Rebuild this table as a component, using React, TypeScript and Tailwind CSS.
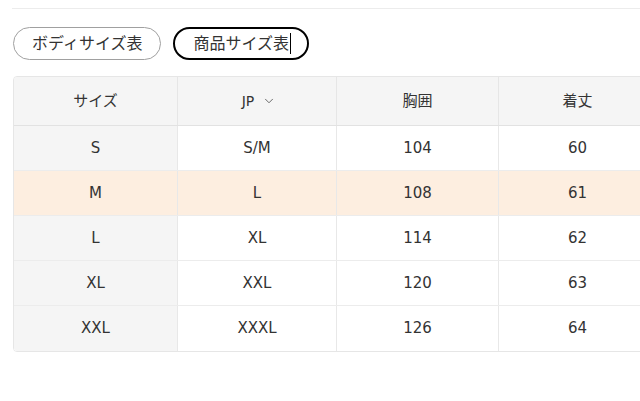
import { ChevronDown } from "lucide-react";

// size chart: body / product tabs + a measurement table (JP sizing)

const ROWS = [
  { size: "S", jp: "S/M", chest: "104", length: "60" },
  { size: "M", jp: "L", chest: "108", length: "61", hl: true },
  { size: "L", jp: "XL", chest: "114", length: "62" },
  { size: "XL", jp: "XXL", chest: "120", length: "63" },
  { size: "XXL", jp: "XXXL", chest: "126", length: "64" },
];

const font = { fontFamily: '"DejaVu Sans", "Noto Sans CJK JP", sans-serif' };

export default function App() {
  return (
    <div className="h-[401px] w-[640px] overflow-hidden bg-white text-[#333]" style={font}>
      <div className="ml-3 mt-2 border-t border-[#ececec]" />

      <div className="flex items-center gap-3 pl-[13px] pt-[18px]">
        <button className="h-[33px] rounded-full border border-[#a0a0a0] px-[18px] text-[16px] leading-none text-[#333]">
          ボディサイズ表
        </button>
        <button className="flex h-[33px] items-center rounded-full border-2 border-black pl-[18px] pr-[16px] text-[16px] leading-none text-[#333]">
          商品サイズ表
          <span className="ml-px inline-block h-[21px] w-px bg-black" />
        </button>
      </div>

      <div className="ml-[13px] mt-[16px] w-[660px] overflow-hidden rounded border border-[#e6e6e6] text-[15px]">
        <div className="flex h-[49px] items-center border-b border-[#e2e2e2] bg-[#f5f5f5]">
          <div className="w-[163px] text-center">サイズ</div>
          <div className="flex w-[159px] items-center justify-center gap-2 self-stretch border-l border-[#e6e6e6] pl-1">
            <span className="text-[14px]">JP</span>
            <ChevronDown className="h-3.5 w-3.5 text-[#555]" strokeWidth={1.5} />
          </div>
          <div className="flex w-[162px] items-center justify-center self-stretch border-l border-[#e6e6e6]">
            胸囲
          </div>
          <div className="flex flex-1 items-center justify-center self-stretch border-l border-[#e6e6e6] pr-[16px]">
            着丈
          </div>
        </div>

        {ROWS.map((r, i) => (
          <div
            key={r.size}
            className={`flex h-[45px] items-stretch ${i < ROWS.length - 1 ? "border-b border-[#ececec]" : ""} ${
              r.hl ? "bg-[#fdeee0]" : "bg-white"
            }`}
          >
            <div className={`flex w-[163px] items-center justify-center ${r.hl ? "" : "bg-[#f5f5f5]"}`}>
              {r.size}
            </div>
            <div className="flex w-[159px] items-center justify-center border-l border-[#e8e8e8]">{r.jp}</div>
            <div className="flex w-[162px] items-center justify-center border-l border-[#e8e8e8]">{r.chest}</div>
            <div className="flex flex-1 items-center justify-center border-l border-[#e8e8e8] pr-[16px]">
              {r.length}
            </div>
          </div>
        ))}
      </div>
    </div>
  );
}
